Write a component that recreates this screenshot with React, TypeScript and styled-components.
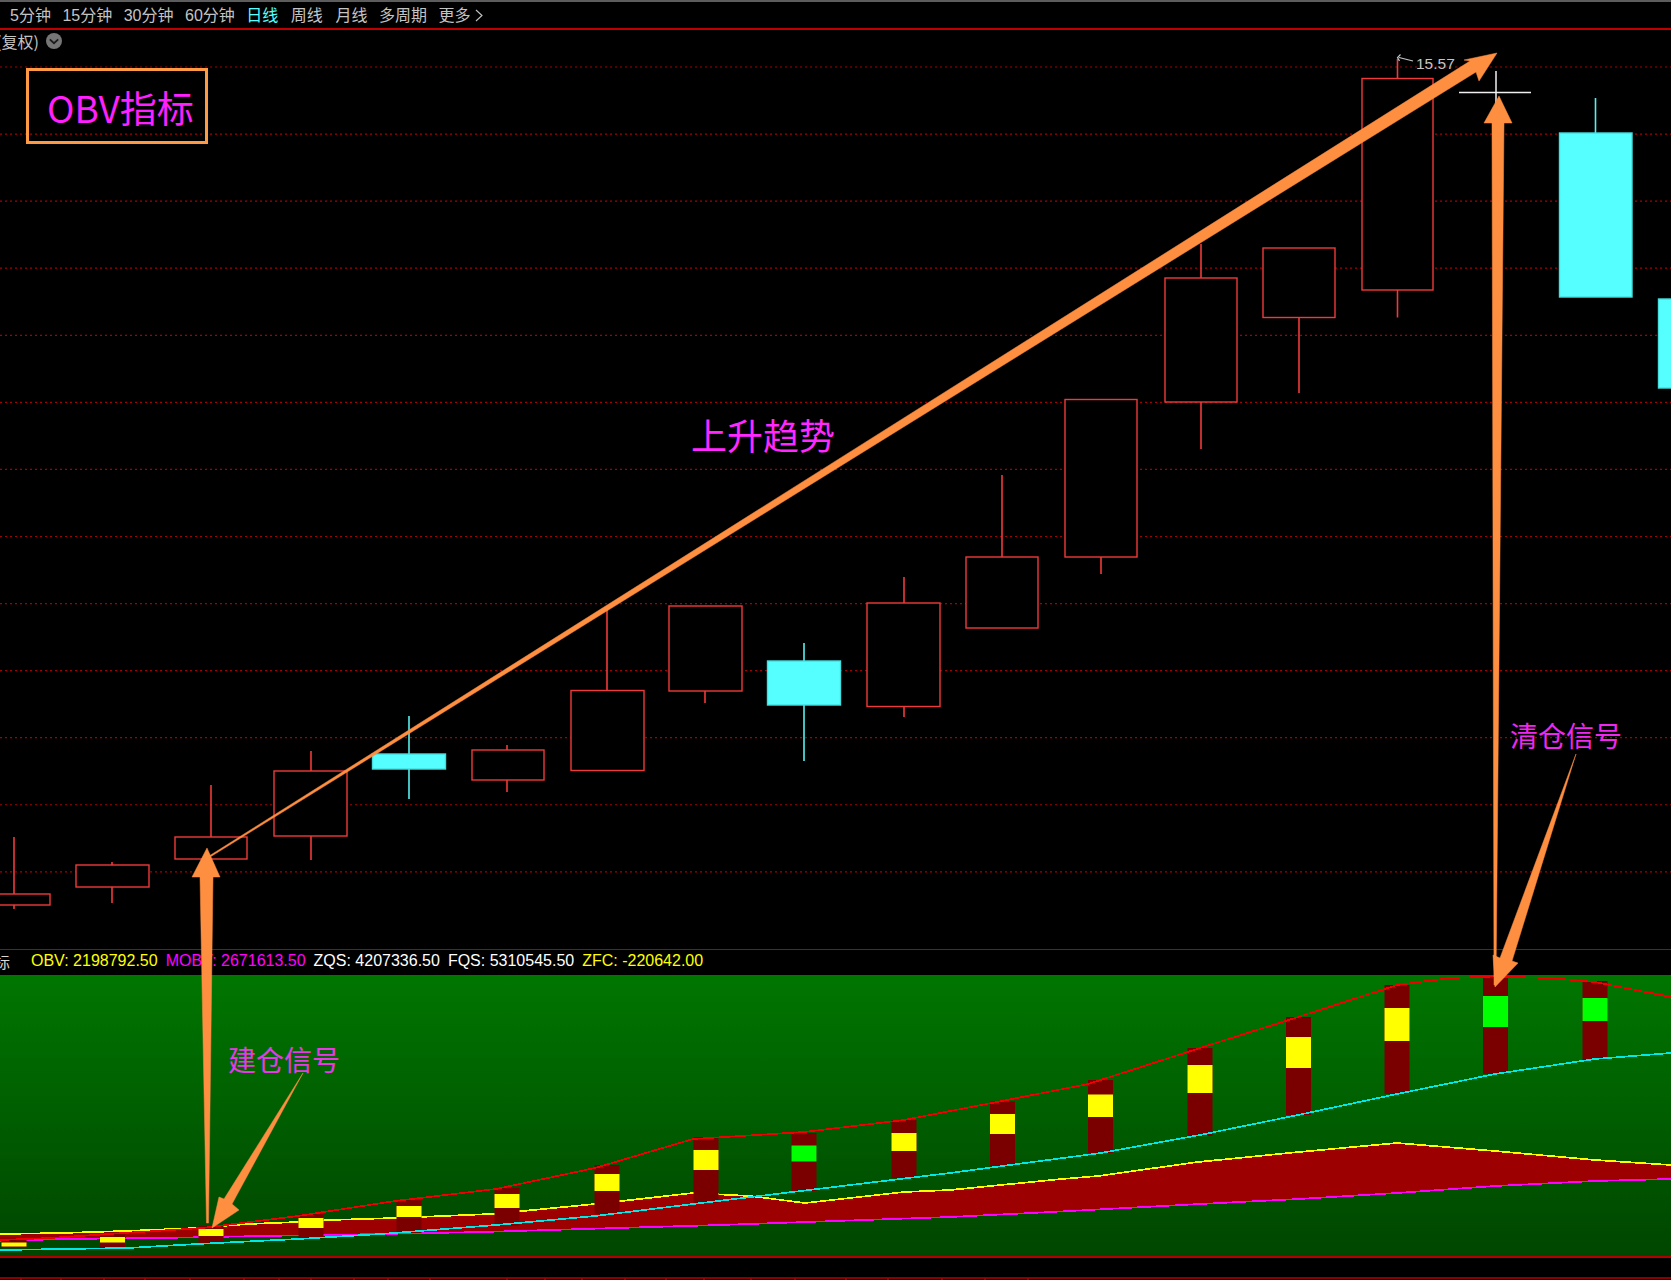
import React from "react";
import styled, { createGlobalStyle } from "styled-components";

const CJK = `"Noto Sans CJK SC", "Liberation Sans", sans-serif`;
const ARIAL = `"Liberation Sans", "Noto Sans CJK SC", sans-serif`;

const Global = createGlobalStyle`
  html, body { margin: 0; padding: 0; background: #000; }
  #root { width: 1671px; height: 1280px; }
`;

const Page = styled.div`
  position: relative;
  display: flex;
  flex-direction: column;
  width: 1671px;
  height: 1280px;
  overflow: hidden;
  background: #000;
`;

const Toolbar = styled.nav`
  box-sizing: border-box;
  display: flex;
  align-items: center;
  gap: 11.5px;
  height: 30px;
  padding: 1px 0 0 10px;
  border-top: 2px solid #5c5c5c;
  border-bottom: 2px solid #c00000;
  font: 16px/1 ${ARIAL};
  color: #c4c4c4;
`;

const Tab = styled.span<{ $active?: boolean; $wide?: boolean }>`
  display: inline-flex;
  align-items: center;
  gap: 5px;
  white-space: nowrap;
  color: ${(p) => (p.$active ? "#55ffff" : "#c4c4c4")};
  margin: ${(p) => (p.$wide ? "0 1px" : "0")};
`;

const MainPane = styled.section`
  position: relative;
  height: 919px;
`;

const ChartSvg = styled.svg`
  display: block;
  width: 100%;
  height: 100%;
`;

const RightsRow = styled.div`
  position: absolute;
  left: 0;
  top: 2px;
  display: flex;
  align-items: center;
  gap: 7px;
  margin-left: -4px;
  font: 16px/18px ${CJK};
  color: #c4c4c4;
`;

const LegendBar = styled.div`
  box-sizing: border-box;
  display: flex;
  align-items: center;
  gap: 8px;
  height: 26px;
  padding-bottom: 3px;
  border-top: 1px solid #b00000;
  font: 16px/1 ${ARIAL};
  white-space: nowrap;
`;

const LegendLead = styled.span`
  margin: 0 15px 0 -6px;
  width: 14px;
  font: 16px/1 ${CJK};
  color: #d8d8d8;
`;

const LegendValue = styled.span<{ $color: string }>`
  color: ${(p) => p.$color};
`;

const IndicatorPane = styled.section`
  height: 281px;
  background: linear-gradient(#007600, #004600);
  border-bottom: 2px solid #b00000;
`;

const FooterGap = styled.div`
  height: 19px;
  background: #000;
`;

const ScaleSvg = styled.svg`
  display: block;
  width: 100%;
  height: 3px;
`;

const Overlay = styled.svg`
  position: absolute;
  left: 0;
  top: 0;
  width: 1671px;
  height: 1280px;
  pointer-events: none;
`;

const TitleBox = styled.div`
  position: absolute;
  left: 26px;
  top: 68px;
  box-sizing: border-box;
  display: flex;
  align-items: center;
  width: 182px;
  height: 76px;
  padding: 2px 0 0 18px;
  border: 3.5px solid #ff9a44;
  font: 37px/1 ${CJK};
  color: #ff20ff;
  white-space: nowrap;
`;

const Note = styled.div<{ $x: number; $y: number; $size: number; $color: string }>`
  position: absolute;
  left: ${(p) => p.$x}px;
  top: ${(p) => p.$y}px;
  font: ${(p) => p.$size}px/1 ${CJK};
  color: ${(p) => p.$color};
  white-space: nowrap;
`;

const GridLine = styled.line`
  stroke: #a80000;
  stroke-width: 1.2;
  stroke-dasharray: 2 3;
`;

const Wick = styled.line<{ $up: boolean }>`
  stroke: ${(p) => (p.$up ? "#f03a3a" : "#55f0f0")};
  stroke-width: 1.6;
`;

const Body = styled.rect<{ $up: boolean }>`
  fill: ${(p) => (p.$up ? "#000" : "#55ffff")};
  stroke: ${(p) => (p.$up ? "#f03a3a" : "#45dede")};
  stroke-width: 1.4;
`;

const PriceLabel = styled.text`
  font: 15.5px ${ARIAL};
  fill: #c4c4c4;
`;

const PriceMark = styled.path`
  fill: none;
  stroke: #c4c4c4;
  stroke-width: 1.2;
`;

const Cross = styled.path`
  fill: none;
  stroke: #f0f0f0;
  stroke-width: 1.5;
`;

const Band = styled.polygon`
  fill: #9c0000;
`;

const Curve = styled.polyline<{ $color: string }>`
  fill: none;
  stroke: ${(p) => p.$color};
  stroke-width: 1.7;
  shape-rendering: crispEdges;
`;

const BarBack = styled.rect`
  fill: #7a0000;
`;

const BarMark = styled.rect<{ $color: string }>`
  fill: ${(p) => p.$color};
`;

const Arrow = styled.polygon`
  fill: #ff8f40;
  stroke: #ff8f40;
  stroke-width: 0.5;
  stroke-linejoin: round;
`;

const Tick = styled.line`
  stroke: #d00000;
  stroke-width: 1.5;
`;

const ScaleLine = styled.line`
  stroke: #8a0000;
  stroke-width: 2;
`;

type Candle = { c: number; l: number; r: number; t: number; b: number; hi: number; lo: number; up: boolean };
const candles: Candle[] = [
  { c: 14, l: -10, r: 50, t: 893, b: 904, hi: 836, lo: 908, up: true },
  { c: 112, l: 76, r: 149, t: 864, b: 886, hi: 861, lo: 902, up: true },
  { c: 211, l: 175, r: 247, t: 836, b: 858, hi: 784, lo: 858, up: true },
  { c: 311, l: 274, r: 347, t: 770, b: 835, hi: 750, lo: 859, up: true },
  { c: 409, l: 372.5, r: 445.5, t: 753, b: 768, hi: 715, lo: 798, up: false },
  { c: 507, l: 472, r: 544, t: 749, b: 779, hi: 744, lo: 791, up: true },
  { c: 607, l: 571, r: 644, t: 689.5, b: 769.5, hi: 605, lo: 770, up: true },
  { c: 705, l: 669, r: 742, t: 605, b: 690, hi: 605, lo: 702, up: true },
  { c: 804, l: 767.5, r: 840.5, t: 660, b: 704, hi: 642, lo: 760, up: false },
  { c: 904, l: 867, r: 940, t: 602, b: 705.5, hi: 576, lo: 716, up: true },
  { c: 1002, l: 966, r: 1038, t: 556, b: 627, hi: 474, lo: 627, up: true },
  { c: 1101, l: 1065, r: 1137, t: 398.5, b: 556, hi: 398, lo: 573, up: true },
  { c: 1201, l: 1165, r: 1237, t: 277, b: 401, hi: 243, lo: 448, up: true },
  { c: 1299, l: 1263, r: 1335, t: 247, b: 316.5, hi: 247, lo: 392, up: true },
  { c: 1397.5, l: 1362, r: 1433, t: 77.5, b: 289, hi: 58, lo: 316.5, up: true },
  { c: 1595.5, l: 1559.5, r: 1632, t: 132, b: 296, hi: 97, lo: 296, up: false },
  { c: 1694, l: 1658.5, r: 1730, t: 298, b: 387, hi: 298, lo: 387, up: false },
];

type Bar = { c: number; t: number; b: number; mt: number; mb: number; green?: boolean };
const bars: Bar[] = [
  { c: 14, t: 1238, b: 1247, mt: 1241.5, mb: 1245.5 },
  { c: 112.5, t: 1233, b: 1247, mt: 1236, mb: 1241.5 },
  { c: 211, t: 1225, b: 1242, mt: 1228, mb: 1235 },
  { c: 311, t: 1213, b: 1237, mt: 1217, mb: 1227 },
  { c: 409, t: 1199, b: 1232, mt: 1205, mb: 1216 },
  { c: 507, t: 1187, b: 1225, mt: 1193, mb: 1207 },
  { c: 607, t: 1164, b: 1213, mt: 1173, mb: 1190 },
  { c: 706, t: 1136, b: 1202, mt: 1149, mb: 1169 },
  { c: 804, t: 1132, b: 1190, mt: 1144.5, mb: 1160.5, green: true },
  { c: 904, t: 1119, b: 1177, mt: 1132, mb: 1150 },
  { c: 1002.5, t: 1100.5, b: 1165, mt: 1113, mb: 1133 },
  { c: 1100.5, t: 1079, b: 1152, mt: 1093.5, mb: 1116 },
  { c: 1200, t: 1047, b: 1135, mt: 1064, mb: 1092 },
  { c: 1298.5, t: 1016, b: 1114, mt: 1036, mb: 1067 },
  { c: 1397, t: 984, b: 1093, mt: 1007, mb: 1040 },
  { c: 1495.5, t: 975, b: 1073, mt: 995, mb: 1026, green: true },
  { c: 1595, t: 980, b: 1059, mt: 997, mb: 1020, green: true },
];

const pts = (list: number[][]) => list.map((p) => p.join(",")).join(" ");

const redLine = [[0, 1239], [50, 1237], [124, 1232], [202, 1227], [298, 1215], [395, 1200], [496, 1188], [595, 1167], [693, 1138], [804, 1131], [904, 1119], [1002, 1100], [1088, 1083], [1200, 1047], [1298, 1016], [1397, 984], [1450, 977], [1495, 975.5], [1550, 977], [1595, 981], [1671, 996]];
const yellowLine = [[0, 1233], [62, 1232], [124, 1230], [197, 1227], [248, 1223], [298, 1221], [330, 1219], [395, 1217], [491, 1213], [523, 1210], [595, 1203], [693, 1192], [750, 1195], [805, 1202], [904, 1191], [950, 1189], [1062, 1178], [1098, 1175], [1198, 1161], [1299, 1151], [1397, 1142], [1495, 1150], [1595, 1159], [1671, 1164]];
const magentaLine = [[0, 1240], [64, 1238], [161, 1237], [262, 1235], [381, 1233], [482, 1231], [583, 1228], [720, 1224], [950, 1216], [1051, 1211], [1200, 1203], [1299, 1198], [1397, 1192], [1495, 1185], [1595, 1180], [1671, 1178]];
const cyanLine = [[0, 1249], [128, 1247], [197, 1243], [298, 1238], [381, 1233], [496, 1224], [595, 1215], [693, 1203], [950, 1172], [1010, 1164], [1101, 1152], [1200, 1134], [1298, 1114], [1397, 1093], [1495, 1073], [1595, 1058], [1671, 1052]];

const tabs = ["5分钟", "15分钟", "30分钟", "60分钟", "日线", "周线", "月线", "多周期"];
const legend = [
  { text: "OBV: 2198792.50", color: "#ffff00" },
  { text: "MOBV: 2671613.50", color: "#ff00ff" },
  { text: "ZQS: 4207336.50", color: "#ffffff" },
  { text: "FQS: 5310545.50", color: "#ffffff" },
  { text: "ZFC: -220642.00", color: "#ffff00" },
];
const ticks = [21, 61, 104, 145, 190, 244, 279, 311, 354, 388, 430, 507, 545, 582, 625, 666, 704, 751, 795, 846, 888, 942, 985, 1028];

export default function App() {
  return (
    <Page>
      <Global />
      <Toolbar>
        {tabs.map((t) => (
          <Tab key={t} $active={t === "日线"} $wide={t === "周线"}>
            {t}
          </Tab>
        ))}
        <Tab>
          更多
          <svg width="8" height="13" viewBox="0 0 8 13">
            <path d="M1 1 L7 6.5 L1 12" fill="none" stroke="#c4c4c4" strokeWidth="1.1" />
          </svg>
        </Tab>
      </Toolbar>

      <MainPane>
        <ChartSvg viewBox="0 29 1671 919" preserveAspectRatio="none">
          {Array.from({ length: 13 }, (_, i) => (
            <GridLine key={i} x1={0} x2={1671} y1={66 + 67.07 * i} y2={66 + 67.07 * i} />
          ))}
          {candles.map((k) => (
            <g key={k.c}>
              <Wick $up={k.up} x1={k.c} x2={k.c} y1={k.hi} y2={k.lo} />
              <Body $up={k.up} x={k.l} y={k.t} width={k.r - k.l} height={k.b - k.t} />
            </g>
          ))}
          <PriceMark d="M1413 60 L1399 56.5 M1400.5 53.5 L1397.5 56.5 L1399.5 60" />
          <PriceLabel x={1416} y={68}>15.57</PriceLabel>
          <Cross d="M1459 91.5 H1531 M1496 70 V104" />
        </ChartSvg>
        <RightsRow>
          <span>(复权)</span>
          <svg width="16" height="16" viewBox="0 0 16 16">
            <circle cx="8" cy="8" r="8" fill="#767676" />
            <path d="M3.8 6.4 L8 10.2 L12.2 6.4" fill="none" stroke="#1c1c1c" strokeWidth="1.8" />
          </svg>
        </RightsRow>
      </MainPane>

      <LegendBar>
        <LegendLead>标</LegendLead>
        {legend.map((l) => (
          <LegendValue key={l.text} $color={l.color}>
            {l.text}
          </LegendValue>
        ))}
      </LegendBar>

      <IndicatorPane>
        <ChartSvg viewBox="0 974 1671 281" preserveAspectRatio="none">
          <Band points={pts([...yellowLine, ...[...magentaLine].reverse()])} />
          <Curve $color="#ff00ff" points={pts(magentaLine)} />
          <Curve $color="#ffff00" points={pts(yellowLine)} />
          {bars.map((b) => (
            <g key={b.c}>
              <BarBack x={b.c - 12.5} y={b.t} width={25} height={b.b - b.t} />
              <BarMark $color={b.green ? "#00ff00" : "#ffff00"} x={b.c - 12.5} y={b.mt} width={25} height={b.mb - b.mt} />
            </g>
          ))}
          <Curve $color="#00e8e8" points={pts(cyanLine)} />
          <Curve $color="#f00000" points={pts(redLine)} />
        </ChartSvg>
      </IndicatorPane>

      <FooterGap />
      <ScaleSvg viewBox="0 0 1671 3">
        <ScaleLine x1={0} x2={1671} y1={1} y2={1} />
        {ticks.map((x) => (
          <Tick key={x} x1={x} x2={x} y1={1.5} y2={3} />
        ))}
      </ScaleSvg>

      <Overlay viewBox="0 0 1671 1280">
        <Arrow points="207.5,857 1470,61 1464,60 1497,53 1479,81 1476,72 208.5,858" />
        <Arrow points="207,848 220,877 213,877 208.5,1223 206.5,1223 200,877 192,877" />
        <Arrow points="1499,96 1512,123 1504,123 1496,985 1494,985 1492,123 1484,123" />
        <Arrow points="303,1073 232,1204 239,1210 212,1228 219,1197 224,1199" />
        <Arrow points="1576,754 1512,961 1518,963 1495,987 1493,955 1500,958" />
      </Overlay>

      <TitleBox>OBV指标</TitleBox>
      <Note $x={691} $y={416} $size={36} $color="#ff28ff">上升趋势</Note>
      <Note $x={228} $y={1045} $size={28} $color="#e838e8">建仓信号</Note>
      <Note $x={1510} $y={721} $size={28} $color="#ee28ee">清仓信号</Note>
    </Page>
  );
}
